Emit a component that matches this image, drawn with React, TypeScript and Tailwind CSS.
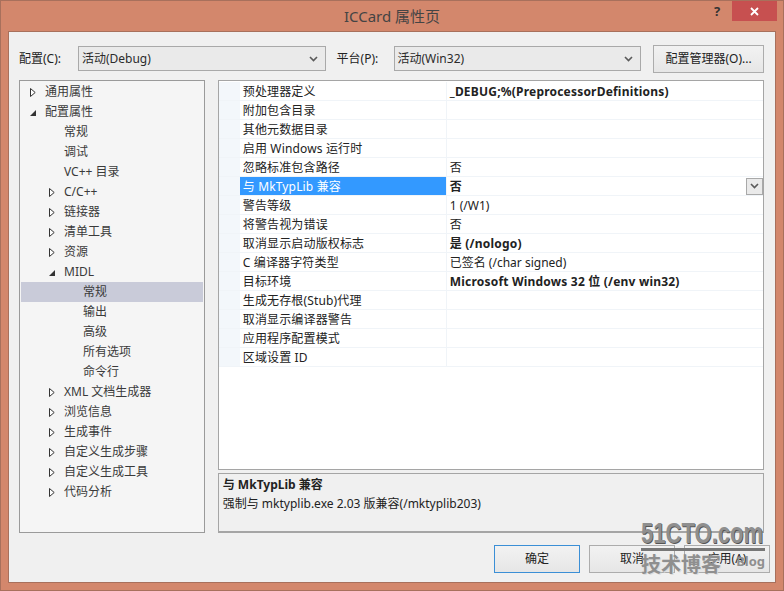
const F = "font-['Noto_Sans','Noto_Sans_CJK_SC',sans-serif]";

function Chevron() {
  return (
    <svg width="9" height="6" viewBox="0 0 9 6" fill="none" stroke="#5a5a5a" strokeWidth="1.6">
      <path d="M1 1 L4.5 4.6 L8 1" />
    </svg>
  );
}

function Combo({ text, w }: { text: string; w: string }) {
  return (
    <div className={`${w} h-[25px] border border-[#a9a9a9] bg-[#eaeaea] flex items-center pl-[3px] pr-[7px] justify-between`}>
      <span className="text-[#2b2b2b]">{text}</span>
      <Chevron />
    </div>
  );
}

const tree: [string, number, "c" | "o" | "n", boolean?][] = [
  ["通用属性", 0, "c"],
  ["配置属性", 0, "o"],
  ["常规", 1, "n"],
  ["调试", 1, "n"],
  ["VC++ 目录", 1, "n"],
  ["C/C++", 1, "c"],
  ["链接器", 1, "c"],
  ["清单工具", 1, "c"],
  ["资源", 1, "c"],
  ["MIDL", 1, "o"],
  ["常规", 2, "n", true],
  ["输出", 2, "n"],
  ["高级", 2, "n"],
  ["所有选项", 2, "n"],
  ["命令行", 2, "n"],
  ["XML 文档生成器", 1, "c"],
  ["浏览信息", 1, "c"],
  ["生成事件", 1, "c"],
  ["自定义生成步骤", 1, "c"],
  ["自定义生成工具", 1, "c"],
  ["代码分析", 1, "c"],
];

const props: [string, string, boolean?][] = [
  ["预处理器定义", "_DEBUG;%(PreprocessorDefinitions)", true],
  ["附加包含目录", ""],
  ["其他元数据目录", ""],
  ["启用 Windows 运行时", ""],
  ["忽略标准包含路径", "否"],
  ["与 MkTypLib 兼容", "否", true],
  ["警告等级", "1 (/W1)"],
  ["将警告视为错误", "否"],
  ["取消显示启动版权标志", "是 (/nologo)", true],
  ["C 编译器字符类型", "已签名 (/char signed)"],
  ["目标环境", "Microsoft Windows 32 位 (/env win32)", true],
  ["生成无存根(Stub)代理", ""],
  ["取消显示编译器警告", ""],
  ["应用程序配置模式", ""],
  ["区域设置 ID", ""],
];

function Arrow({ kind }: { kind: "c" | "o" | "n" }) {
  if (kind === "n") return <span className="w-[6px] h-[9px]" />;
  if (kind === "c")
    return (
      <svg width="6" height="9" viewBox="0 0 6 9" fill="#fff" stroke="#333">
        <path d="M0.5 0.5 L5.2 4.5 L0.5 8.5 Z" />
      </svg>
    );
  return (
    <svg width="6" height="9" viewBox="0 0 6 9" fill="#333">
      <path d="M6 2 V8 H0 Z" />
    </svg>
  );
}

function Btn({ text, primary }: { text: string; primary?: boolean }) {
  return (
    <div
      className={`w-[86px] h-[28px] border flex items-center justify-center text-[#222] bg-gradient-to-b from-[#f2f2f2] to-[#e6e6e6] ${
        primary ? "border-[#3b8fd6]" : "border-[#acacac]"
      }`}
    >
      {text}
    </div>
  );
}

export default function App() {
  return (
    <div className={`${F} relative w-[784px] h-[591px] bg-[#d3876c] border border-[#a8705c] flex flex-col text-[12px] leading-[16px] text-[#333] overflow-hidden`}>
      <div className="h-[30px] shrink-0 relative flex items-center justify-center text-[15px] text-[#444]">
        <span>ICCard 属性页</span>
        <span className="absolute left-[713px] top-[2px] text-[#333] font-bold text-[13px]">?</span>
        <div className="absolute left-[731px] top-0 w-[45px] h-[20px] bg-[#c75050] flex items-center justify-center">
          <svg width="9" height="9" viewBox="0 0 9 9" stroke="#fff" strokeWidth="1.8">
            <path d="M1 1 L8 8 M8 1 L1 8" />
          </svg>
        </div>
      </div>

      <div className="mx-[7px] mb-[7px] flex-1 bg-[#f0f0f0] border border-[#a8705c] flex flex-col pl-[10px] pr-[11px]">
        <div className="flex items-center mt-[14px] h-[25px]">
          <span className="w-[59px] text-[#222]">配置(C):</span>
          <Combo text="活动(Debug)" w="w-[248px]" />
          <span className="ml-[11px] w-[57px] text-[#222]">平台(P):</span>
          <Combo text="活动(Win32)" w="w-[248px]" />
          <div className="ml-[12px] w-[111px] h-[28px] border border-[#acacac] flex items-center justify-center text-[#222] bg-gradient-to-b from-[#f2f2f2] to-[#e6e6e6]">
            配置管理器(O)...
          </div>
        </div>

        <div className="flex mt-[9px] h-[453px] gap-[13px]">
          <div className="w-[186px] bg-[#f5f5f5] border border-[#9a9a9a] pt-[1px] px-px">
            {tree.map(([t, lvl, k, sel], i) => (
              <div key={i} className={`h-[20px] flex items-center ${sel ? "bg-[#c9cbd9]" : ""}`}>
                <span className={`flex items-center ${lvl === 0 ? "w-[24px] pl-[9px]" : lvl === 1 ? "w-[43px] pl-[28px]" : "w-[62px]"}`}>
                  <Arrow kind={k} />
                </span>
                <span className="text-[#3a3a3a]">{t}</span>
              </div>
            ))}
          </div>

          <div className="w-[547px] flex flex-col">
            <div className="h-[390px] bg-white border border-[#a5a5a5] flex flex-col pt-[1px]">
              {props.map(([a, b, bold], i) => {
                const sel = i === 5;
                return (
                  <div key={i} className="h-[19px] flex shrink-0 border-b border-[#f0f4f8]">
                    <div className="w-[21px] bg-[#f3f7fb]" />
                    <div className={`w-[206px] pl-[3px] pt-px flex items-center tracking-[0.15px] ${sel ? "bg-[#3399ff] text-white" : "text-[#222]"}`}>{a}</div>
                    <div className={`flex-1 border-l border-[#f0f4f8] pl-[3px] flex items-center justify-between text-[#222] ${bold ? "font-bold tracking-[0.2px]" : ""}`}>
                      <span className="pt-px">{b}</span>
                      {sel && (
                        <span className="w-[17px] h-[17px] border border-[#a9a9a9] bg-[#eaeaea] flex items-center justify-center">
                          <Chevron />
                        </span>
                      )}
                    </div>
                  </div>
                );
              })}
            </div>
            <div className="mt-[3px] h-[60px] border border-[#a5a5a5] border-b-[2px] px-[4px] pt-[3px] text-[#222]">
              <div className="font-bold h-[19px]">与 MkTypLib 兼容</div>
              <div>强制与 mktyplib.exe 2.03 版兼容(/mktyplib203)</div>
            </div>
          </div>
        </div>

        <div className="flex justify-end gap-[9px] mt-[12px] text-[#222] -mr-[6px]">
          <Btn text="确定" primary />
          <Btn text="取消" />
          <Btn text="应用(A)" />
        </div>
      </div>

      <div className="absolute left-[640px] top-[518px] w-[124px] text-[#8f8f8f] font-bold pointer-events-none">
        <div className="text-[29px] leading-[28px] w-[160px] origin-left scale-x-[0.76] font-['Liberation_Sans',sans-serif] [text-shadow:1px_1px_0_#555]">51CTO.com</div>
        <div className="h-[3px] bg-[#777] my-[1px]" />
        <div className="flex items-start justify-between pt-[2px]">
          <span className="text-[20px] leading-[22px] [text-shadow:1px_1px_0_#ddd]">技术博客</span>
          <span className="text-[13px] leading-[16px] -mt-[1px]">Blog</span>
        </div>
      </div>
    </div>
  );
}
